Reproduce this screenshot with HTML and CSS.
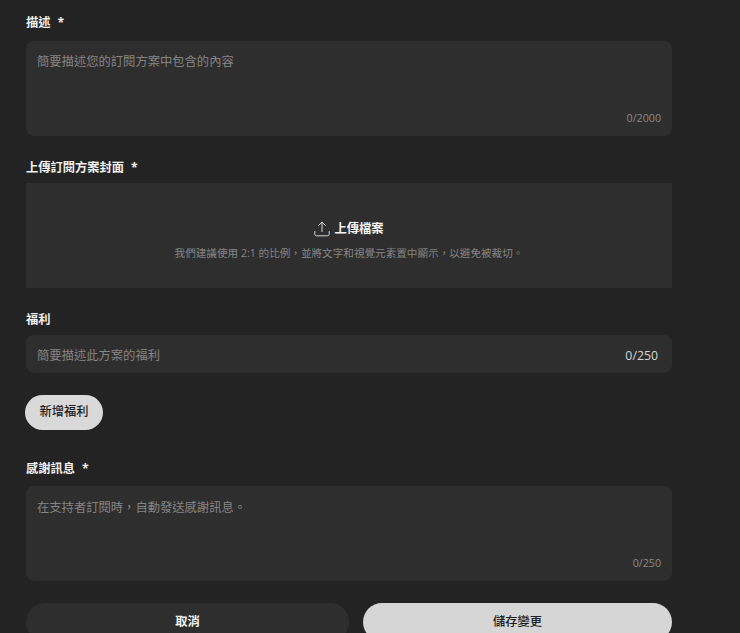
FILE: index.html
```html
<!DOCTYPE html>
<html lang="zh-Hant">
<head>
<meta charset="utf-8">
<title>編輯訂閱方案</title>
<link rel="stylesheet" href="styles.css">
</head>
<body>
<form class="form">
  <div class="field field-desc">
    <div class="label">描述<span class="req">*</span></div>
    <div class="box area">
      <div class="ph">簡要描述您的訂閱方案中包含的內容</div>
      <div class="count">0/2000</div>
    </div>
  </div>
  <div class="field field-cover">
    <div class="label">上傳訂閱方案封面<span class="req">*</span></div>
    <div class="box upload">
      <div class="upload-title">
        <svg class="upload-icon" viewBox="0 0 16 16" width="16" height="16" fill="none" stroke="#d6d6d6" stroke-width="1" stroke-linecap="round" stroke-linejoin="round"><path d="M8 10.5V1.2M4.6 4.4 8 1.2l3.4 3.2M.8 10.5v2.6c0 1 .7 1.7 1.7 1.7h11c1 0 1.7-.7 1.7-1.7v-2.6"/></svg>
        <span>上傳檔案</span>
      </div>
      <div class="hint">我們建議使用 2:1 的比例，並將文字和視覺元素置中顯示，以避免被裁切。</div>
    </div>
  </div>
  <div class="field field-perk">
    <div class="label">福利</div>
    <div class="box single">
      <div class="ph">簡要描述此方案的福利</div>
      <div class="count-strong">0/250</div>
    </div>
  </div>
  <button type="button" class="btn-add">新增福利</button>
  <div class="field field-thanks">
    <div class="label">感謝訊息<span class="req">*</span></div>
    <div class="box area">
      <div class="ph">在支持者訂閱時，自動發送感謝訊息。</div>
      <div class="count">0/250</div>
    </div>
  </div>
  <div class="actions">
    <button type="button" class="btn cancel">取消</button>
    <button type="button" class="btn save">儲存變更</button>
  </div>
</form>
</body>
</html>
```
FILE: styles.css
```css
* { box-sizing: border-box; }
html, body { height: 100%; }
body {
  margin: 0;
  overflow: hidden;
  background: #232323;
  color: #f2f2f2;
  font-family: "Open Sans", "Noto Sans CJK TC", sans-serif;
}
.form {
  width: 646px;
  margin-left: 26px;
  padding-top: 13px;
  display: flex;
  flex-direction: column;
}
.label {
  height: 20px;
  font-size: 12.25px;
  line-height: 20px;
  font-weight: 700;
  color: #f0f0f0;
  margin-bottom: 8px;
}
.req { margin-left: 7px; }
.box { background: #2e2e2e; border-radius: 8px; }
.ph { font-size: 12.3px; line-height: 18px; color: #858585; }
.area {
  height: 95px;
  padding: 12px 11px 10px;
  display: flex;
  flex-direction: column;
  justify-content: space-between;
}
.count { align-self: flex-end; font-size: 10.7px; line-height: 16px; color: #8a8a8a; }
.field-cover { margin-top: 22px; }
.field-cover .label { margin-bottom: 5px; }
.upload {
  height: 105px;
  border-radius: 0;
  display: flex;
  flex-direction: column;
  align-items: center;
  padding-top: 36px;
}
.upload-title {
  display: flex;
  align-items: center;
  gap: 5px;
  margin-left: -1px;
  font-size: 12.25px;
  line-height: 20px;
  font-weight: 700;
  color: #f2f2f2;
}
.upload-icon { display: block; }
.hint { margin-top: 6px; font-size: 10.6px; line-height: 16px; color: #858585; }
.field-perk { margin-top: 22px; }
.field-perk .label { margin-bottom: 5px; }
.single {
  height: 38px;
  padding: 0 14px 0 11px;
  display: flex;
  align-items: center;
  justify-content: space-between;
}
.single .ph { padding-top: 3px; }
.count-strong { padding-top: 2px; font-size: 12.3px; color: #d6d6d6; }
.btn-add {
  align-self: flex-start;
  margin-top: 22px;
  width: 78px;
  height: 35px;
  border: 0;
  padding: 0;
  margin-left: -1px;
  border-radius: 18px;
  background: #d9d9d9;
  color: #1e1e1e;
  font: 500 12.25px/1 "Open Sans", "Noto Sans CJK TC", sans-serif;
}
.field-thanks { margin-top: 29px; }
.field-thanks .label { margin-bottom: 7px; }
.field-thanks .ph { padding-top: 1px; }
.actions { display: flex; gap: 14px; margin-top: 22px; }
.btn {
  height: 38px;
  border: 0;
  padding: 0;
  border-radius: 19px;
  font: 500 12.25px/1 "Open Sans", "Noto Sans CJK TC", sans-serif;
}
.cancel { width: 323px; background: #2e2e2e; color: #f2f2f2; font-weight: 700; }
.save { width: 309px; background: #d6d6d6; color: #1e1e1e; }
```
